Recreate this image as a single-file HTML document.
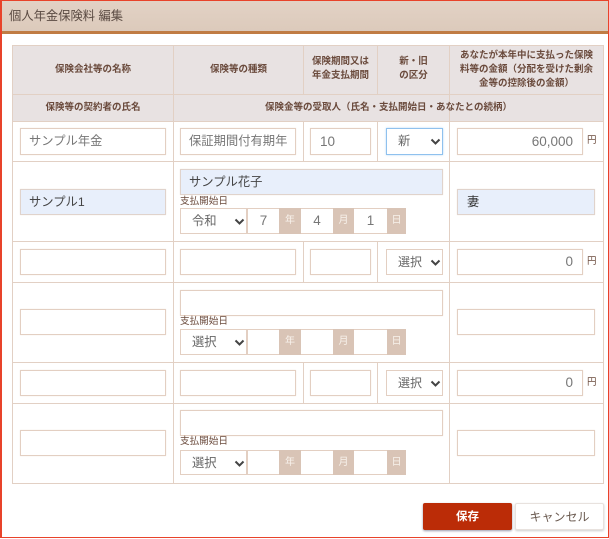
<!DOCTYPE html>
<html lang="ja"><head><meta charset="utf-8"><style>
html,body{margin:0;padding:0;background:#fff}
body{width:609px;height:539px;position:relative;overflow:hidden;font-family:"Liberation Sans","Noto Sans CJK JP",sans-serif;color:#555;filter:blur(.3px)}
div{position:absolute;box-sizing:border-box;white-space:nowrap}
.hl{height:1px;left:12px;width:592px;background:#e2d0c4}
.vl{width:1px;background:#e2d0c4}
.th{background:#e8e2e2}
.t{color:#6a4a3c;font-size:9.5px;font-weight:bold;text-align:center;line-height:14px}
.i{border:1px solid #e3cfc2;background:#fff;box-shadow:0 0 1px #eee3db;font-size:12.3px;color:#777;line-height:24px;padding-left:8px}
.b{background:#e8effb;color:#444;border-color:#e0d3cc}
.r{text-align:right;padding:0 9px 0 0;font-size:13.5px}
.u{font-size:9.5px;color:#6a4a3c;line-height:12px}
.l{font-size:9.6px;color:#6a4a3c;line-height:12px;left:180px;width:60px}
.s{border:1px solid #e3cfc2;background:#fff;font-size:12.3px;color:#666;line-height:24px;padding-left:11px}
.s svg{position:absolute;right:1px;top:9px}
.d{background:#d9c4b6;color:#f8f2ec;font-size:10px;text-align:center}
.n{background:#fff;border-top:1px solid #e3cfc2;border-bottom:1px solid #e3cfc2;font-size:13.5px;color:#777;text-align:center}
</style></head><body>
<div style="left:0;top:0;width:609px;height:31px;background:linear-gradient(#e2d2c5,#dccabb)"></div>
<div style="left:2px;top:31px;width:606px;height:3px;background:#c07c44"></div>
<div style="left:9px;top:6px;font-size:12.300px;line-height:20px;color:#5a4a42">個人年金保険料 編集</div>
<div style="left:0;top:0;width:609px;height:538px;border:solid #e8432a;border-width:1px 1px 1px 2px;z-index:5"></div>

<div class="th" style="left:12px;top:45px;width:592px;height:77px"></div>
<div class="hl" style="top:45px"></div><div class="hl" style="top:94px"></div><div class="hl" style="top:121px"></div>
<div class="hl" style="top:161px"></div><div class="hl" style="top:241px"></div><div class="hl" style="top:282px"></div>
<div class="hl" style="top:362px"></div><div class="hl" style="top:403px"></div><div class="hl" style="top:483px"></div>
<div class="vl" style="left:12px;top:45px;height:439px"></div>
<div class="vl" style="left:173px;top:45px;height:439px"></div>
<div class="vl" style="left:449px;top:45px;height:439px"></div>
<div class="vl" style="left:603px;top:45px;height:439px"></div>
<div class="vl" style="left:303px;top:45px;height:50px"></div>
<div class="vl" style="left:377px;top:45px;height:50px"></div>
<div class="vl" style="left:303px;top:121px;height:41px"></div>
<div class="vl" style="left:377px;top:121px;height:41px"></div>
<div class="vl" style="left:303px;top:241px;height:42px"></div>
<div class="vl" style="left:377px;top:241px;height:42px"></div>
<div class="vl" style="left:303px;top:362px;height:42px"></div>
<div class="vl" style="left:377px;top:362px;height:42px"></div>

<div class="t" style="left:13px;top:63px;width:160px">保険会社等の名称</div>
<div class="t" style="left:174px;top:63px;width:129px">保険等の種類</div>
<div class="t" style="left:304px;top:55px;width:73px">保険期間又は<br>年金支払期間</div>
<div class="t" style="left:378px;top:55px;width:71px">新・旧<br>の区分</div>
<div class="t" style="left:450px;top:49px;width:153px">あなたが本年中に支払った保険<br>料等の金額（分配を受けた剰余<br>金等の控除後の金額）</div>
<div class="t" style="left:13px;top:101px;width:160px">保険等の契約者の氏名</div>
<div class="t" style="left:174px;top:101px;width:429px">保険金等の受取人（氏名・支払開始日・あなたとの続柄）</div>

<div class="i" style="left:20px;top:128px;width:146px;height:27px;line-height:25px">サンプル年金</div>
<div class="i" style="left:180px;top:128px;width:116px;height:27px;line-height:25px">保証期間付有期年</div>
<div class="i" style="left:310px;top:128px;width:61px;height:27px;line-height:25px;font-size:13.5px;padding-left:9px">10</div>
<div class="s" style="left:386px;top:128px;width:57px;height:27px;border:1px solid #8fc1ee;box-shadow:0 0 2px #b5d8f5;line-height:25px"><svg width="11" height="7" viewBox="0 0 11 7"><path d="M1.500 1.500 5.500 5.500l4-4" fill="none" stroke="#444" stroke-width="2"/></svg>新</div>
<div class="i r" style="left:457px;top:128px;width:126px;height:27px;line-height:25px">60,000</div>
<div class="u" style="left:587px;top:135px">円</div>

<div class="i b" style="left:20px;top:189px;width:146px;height:26px">サンプル1</div>
<div class="i b" style="left:180px;top:169px;width:263px;height:26px">サンプル花子</div>
<div class="l" style="top:196px">支払開始日</div>
<div class="s" style="left:180px;top:208px;width:67px;height:26px"><svg width="11" height="7" viewBox="0 0 11 7"><path d="M1.500 1.500 5.500 5.500l4-4" fill="none" stroke="#444" stroke-width="2"/></svg>令和</div>
<div class="n" style="left:247px;top:208px;width:32px;height:26px;line-height:24px;border-left:1px solid #e3cfc2">7</div>
<div class="d" style="left:279px;top:208px;width:22px;height:26px;line-height:25px">年</div>
<div class="n" style="left:301px;top:208px;width:32px;height:26px;line-height:24px">4</div>
<div class="d" style="left:333px;top:208px;width:21px;height:26px;line-height:25px">月</div>
<div class="n" style="left:354px;top:208px;width:33px;height:26px;line-height:24px">1</div>
<div class="d" style="left:387px;top:208px;width:19px;height:26px;line-height:25px">日</div>
<div class="i b" style="left:457px;top:189px;width:138px;height:26px;color:#333;padding-left:9px">妻</div>

<div class="i" style="left:20px;top:249px;width:146px;height:26px"></div>
<div class="i" style="left:180px;top:249px;width:116px;height:26px"></div>
<div class="i" style="left:310px;top:249px;width:61px;height:26px"></div>
<div class="s" style="left:386px;top:249px;width:57px;height:26px;font-size:12px"><svg width="11" height="7" viewBox="0 0 11 7"><path d="M1.500 1.500 5.500 5.500l4-4" fill="none" stroke="#444" stroke-width="2"/></svg>選択</div>
<div class="i r" style="left:457px;top:249px;width:126px;height:26px">0</div>
<div class="u" style="left:587px;top:256px">円</div>

<div class="i" style="left:20px;top:309px;width:146px;height:26px"></div>
<div class="i" style="left:180px;top:290px;width:263px;height:26px"></div>
<div class="l" style="top:316px">支払開始日</div>
<div class="s" style="left:180px;top:329px;width:67px;height:26px"><svg width="11" height="7" viewBox="0 0 11 7"><path d="M1.500 1.500 5.500 5.500l4-4" fill="none" stroke="#444" stroke-width="2"/></svg>選択</div>
<div class="n" style="left:247px;top:329px;width:32px;height:26px;border-left:1px solid #e3cfc2"></div>
<div class="d" style="left:279px;top:329px;width:22px;height:26px;line-height:25px">年</div>
<div class="n" style="left:301px;top:329px;width:32px;height:26px"></div>
<div class="d" style="left:333px;top:329px;width:21px;height:26px;line-height:25px">月</div>
<div class="n" style="left:354px;top:329px;width:33px;height:26px"></div>
<div class="d" style="left:387px;top:329px;width:19px;height:26px;line-height:25px">日</div>
<div class="i" style="left:457px;top:309px;width:138px;height:26px"></div>

<div class="i" style="left:20px;top:370px;width:146px;height:26px"></div>
<div class="i" style="left:180px;top:370px;width:116px;height:26px"></div>
<div class="i" style="left:310px;top:370px;width:61px;height:26px"></div>
<div class="s" style="left:386px;top:370px;width:57px;height:26px;font-size:12px"><svg width="11" height="7" viewBox="0 0 11 7"><path d="M1.500 1.500 5.500 5.500l4-4" fill="none" stroke="#444" stroke-width="2"/></svg>選択</div>
<div class="i r" style="left:457px;top:370px;width:126px;height:26px">0</div>
<div class="u" style="left:587px;top:377px">円</div>

<div class="i" style="left:20px;top:430px;width:146px;height:26px"></div>
<div class="i" style="left:180px;top:410px;width:263px;height:26px"></div>
<div class="l" style="top:436px">支払開始日</div>
<div class="s" style="left:180px;top:450px;width:67px;height:25px"><svg width="11" height="7" viewBox="0 0 11 7"><path d="M1.500 1.500 5.500 5.500l4-4" fill="none" stroke="#444" stroke-width="2"/></svg>選択</div>
<div class="n" style="left:247px;top:450px;width:32px;height:25px;border-left:1px solid #e3cfc2"></div>
<div class="d" style="left:279px;top:450px;width:22px;height:25px;line-height:25px">年</div>
<div class="n" style="left:301px;top:450px;width:32px;height:25px"></div>
<div class="d" style="left:333px;top:450px;width:21px;height:25px;line-height:25px">月</div>
<div class="n" style="left:354px;top:450px;width:33px;height:25px"></div>
<div class="d" style="left:387px;top:450px;width:19px;height:25px;line-height:25px">日</div>
<div class="i" style="left:457px;top:430px;width:138px;height:26px"></div>

<div style="left:423px;top:503px;width:89px;height:27px;background:#bb2c07;border-radius:2px;box-shadow:0 1px 2px #99a;color:#fff;font-size:11.5px;font-weight:bold;text-align:center;line-height:28px">保存</div>
<div style="left:515px;top:503px;width:89px;height:27px;background:#fff;border:1px solid #e8e2de;border-radius:2px;box-shadow:0 1px 2px #ccc;color:#6a5a50;font-size:12px;text-align:center;line-height:27px">キャンセル</div>
</body></html>
